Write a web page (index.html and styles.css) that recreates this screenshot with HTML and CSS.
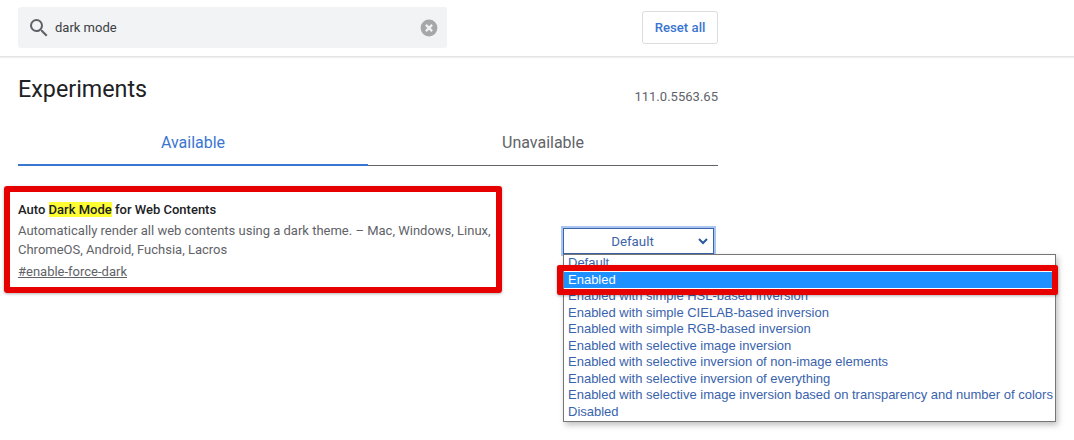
FILE: index.html
```html
<!DOCTYPE html>
<html lang="en">
<head>
<meta charset="utf-8">
<title>Experiments</title>
<link rel="stylesheet" href="styles.css">
</head>
<body>
<header class="top">
  <div class="search">
    <svg class="search-icon" width="24" height="24" viewBox="0 0 24 24"><path fill="#5f6368" d="M15.5 14h-.79l-.28-.27A6.47 6.47 0 0 0 16 9.5 6.5 6.5 0 1 0 9.5 16c1.61 0 3.09-.59 4.23-1.57l.27.28v.79l5 4.99L20.49 19l-4.99-5zm-6 0C7.01 14 5 11.99 5 9.5S7.01 5 9.5 5 14 7.01 14 9.5 11.99 14 9.5 14z"/></svg>
    <span class="query">dark mode</span>
    <svg class="clear-icon" width="18" height="18" viewBox="0 0 18 18"><circle cx="9" cy="9" r="8.4" fill="#a6a7aa"/><path d="M5.9 5.9l6.2 6.2M12.1 5.9l-6.2 6.2" stroke="#f1f3f4" stroke-width="2.2"/></svg>
  </div>
  <button class="reset">Reset all</button>
</header>
<main class="content">
  <div class="title-row">
    <h1 class="title">Experiments</h1>
    <span class="version">111.0.5563.65</span>
  </div>
  <nav class="tabs">
    <div class="tab tab-active">Available</div>
    <div class="tab">Unavailable</div>
  </nav>
  <section class="flag">
    <div class="flag-text">
      <h2 class="flag-name">Auto <mark class="hl">Dark Mode</mark> for Web Contents</h2>
      <p class="flag-desc">Automatically render all web contents using a dark theme. – Mac, Windows, Linux, ChromeOS, Android, Fuchsia, Lacros</p>
      <a class="flag-link">#enable-force-dark</a>
    </div>
    <div class="select">
      <span class="select-label">Default</span>
      <svg class="chevron" width="10" height="7" viewBox="0 0 10 7"><path d="M1 1l4 4 4-4" fill="none" stroke="#2a5a9e" stroke-width="2"/></svg>
    </div>
  </section>
</main>
<ul class="dropdown">
  <li>Default</li>
  <li class="selected">Enabled</li>
  <li>Enabled with simple HSL-based inversion</li>
  <li>Enabled with simple CIELAB-based inversion</li>
  <li>Enabled with simple RGB-based inversion</li>
  <li>Enabled with selective image inversion</li>
  <li>Enabled with selective inversion of non-image elements</li>
  <li>Enabled with selective inversion of everything</li>
  <li>Enabled with selective image inversion based on transparency and number of colors</li>
  <li>Disabled</li>
</ul>
<div class="mark-flag"></div>
<div class="mark-option"></div>
</body>
</html>
```
FILE: styles.css
```css
* { box-sizing: border-box; }
html, body { margin: 0; height: 440px; overflow: hidden; background: #fff; }
body { position: relative; font-family: Roboto, "Liberation Sans", sans-serif; color: #202124; }
.top {
  height: 57px;
  padding: 7px 356px 0 18px;
  display: flex;
  justify-content: space-between;
  align-items: flex-start;
  border-bottom: 1px solid #e4e4e4;
  box-shadow: 0 1px 1px #f0f0f0;
}
.search {
  width: 429px;
  height: 41px;
  background: #f1f3f4;
  border-radius: 3px;
  display: flex;
  align-items: center;
  padding: 0 9px;
}
.search-icon { flex: none; }
.query { margin-left: 4px; font-size: 13px; color: #3c4043; flex: 1; }
.clear-icon { flex: none; }
.reset {
  margin-top: 4px;
  width: 76px;
  height: 33px;
  background: #fff;
  border: 1px solid #dadce0;
  border-radius: 3px;
  color: #3a76d0;
  font: 500 13.2px Roboto, sans-serif;
  padding: 0;
}
.content { width: 718px; padding-left: 18px; }
.title-row { display: flex; justify-content: space-between; align-items: flex-start; height: 52px; padding-top: 17px; }
.title { margin: 0; font-size: 23.3px; font-weight: 400; line-height: 30px; }
.version { font-size: 13px; color: #5f6368; margin-top: 15px; letter-spacing: 0.02px; }
.tabs { display: flex; height: 57px; }
.tab {
  flex: 1;
  text-align: center;
  font-size: 16px;
  color: #5f6368;
  padding-top: 24px;
  border-bottom: 1px solid #5f6368;
}
.tab-active { color: #3a76d0; border-bottom: 2px solid #3a76d0; }
.flag { display: flex; align-items: flex-start; padding-top: 35px; }
.flag-text { width: 476px; flex: none; }
.flag-name { margin: 0; font-size: 13px; font-weight: 500; line-height: 18px; color: #202124; }
.hl { background: #ffff33; color: inherit; }
.flag-desc { margin: 2px 0 0; font-size: 13px; line-height: 19px; color: #5f6368; }
.flag-link { display: block; margin-top: 3px; font-size: 13px; line-height: 20px; color: #5f6368; text-decoration: underline; }
.select {
  margin: 27px 0 0 69px;
  width: 151px;
  height: 26px;
  border: 1px solid #3d64a8;
  outline: 2px solid #a9c6f3;
  display: flex;
  align-items: center;
  justify-content: center;
  position: relative;
  font-size: 13.3px;
  color: #3d64a8;
  padding-right: 12px;
}
.chevron { position: absolute; right: 5px; top: 9px; }
.dropdown {
  position: absolute;
  left: 563px;
  top: 254px;
  width: 493px;
  height: 168px;
  margin: 0;
  padding: 0;
  list-style: none;
  background: #fff;
  border: 1px solid #767676;
  box-shadow: 2px 3px 6px rgba(0,0,0,.25);
  font: 13px/16.55px "Liberation Sans", Arial, sans-serif;
  color: #3a63ad;
  overflow: hidden;
}
.dropdown li { padding-left: 4px; height: 16.55px; white-space: nowrap; }
.dropdown .selected { background: #1e90ff; color: #fff; }
.mark-flag {
  position: absolute; left: 4px; top: 186px; width: 498px; height: 107px;
  border: 6px solid #e60000; border-radius: 3px;
  box-shadow: 0 1px 3px rgba(0,0,0,.3);
}
.mark-option {
  position: absolute; left: 557px; top: 265px; width: 501px; height: 30px;
  border: 6px solid #e60000; border-radius: 2px;
  box-shadow: 0 1px 3px rgba(0,0,0,.3);
}
```
